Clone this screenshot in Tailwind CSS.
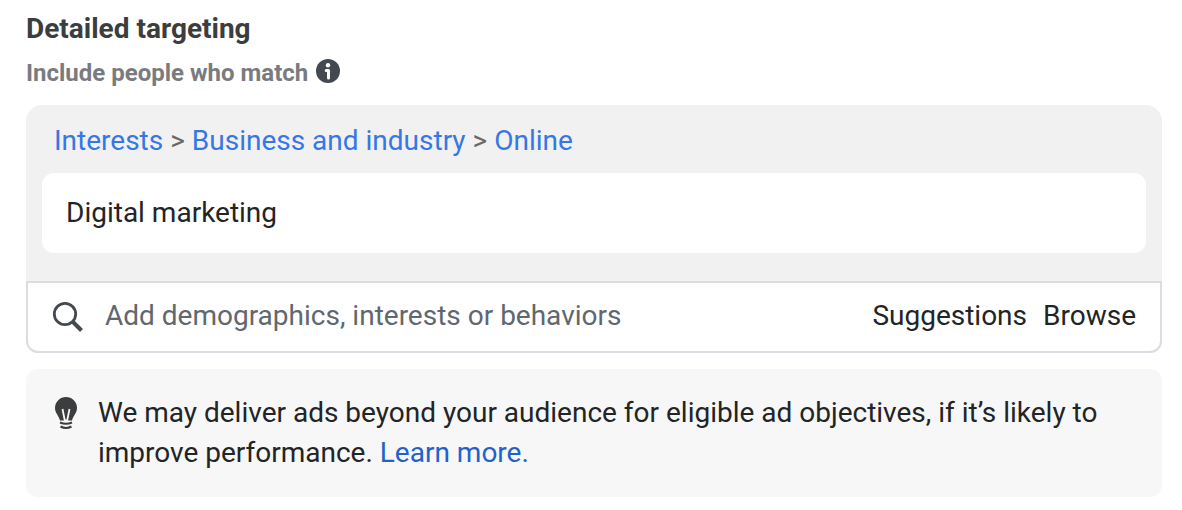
<!DOCTYPE html>
<html lang="en">
<head>
  <meta charset="UTF-8" />
  <meta name="viewport" content="width=device-width, initial-scale=1.0" />
  <title>Detailed targeting</title>
  <script src="https://cdn.jsdelivr.net/npm/@tailwindcss/browser@4"></script>
</head>
<body class="bg-white font-['Roboto',sans-serif] text-[28px] leading-10 text-[#222426]">

<main class="pl-[26px] pr-5 pt-[9px] pb-3">

  <!-- Heading -->
  <h1 class="font-bold text-[#3c3d3e]">Detailed targeting</h1>
  <div class="flex items-center gap-2 pt-1 pb-3">
    <h2 class="text-2xl leading-10 font-bold text-[#7a7b7f]">Include people who match</h2>
    <button type="button" aria-label="More information" class="size-6 mb-1">
      <svg viewBox="0 0 24 24" class="size-6">
        <circle cx="12" cy="12" r="12" fill="#444950" />
        <circle cx="12" cy="6.200" r="2.200" fill="#fff" />
        <path d="M10.200 11.500h2.300v7.500" fill="none" stroke="#fff" stroke-width="3" stroke-linecap="round" stroke-linejoin="round" />
      </svg>
    </button>
  </div>

  <!-- Selected interests -->
  <section class="rounded-t-2xl rounded-b-xl bg-[#f1f1f1]">
    <nav aria-label="Category" class="px-7 pt-4 pb-3 text-[#69696b]">
      <a href="#" class="text-[#3578e5]">Interests</a>
      <span>&gt;</span>
      <a href="#" class="text-[#3578e5]">Business and industry</a>
      <span>&gt;</span>
      <a href="#" class="text-[#3578e5]">Online</a>
    </nav>
    <div class="mx-4 mb-7 rounded-xl bg-white px-6 py-5">Digital marketing</div>

    <!-- Search -->
    <div class="flex items-center rounded-b-xl border-2 border-[#dadde1] bg-white px-6 pt-[13px] pb-[15px]">
      <svg viewBox="0 0 32 32" class="size-8 shrink-0" aria-hidden="true">
        <circle cx="13" cy="14" r="10.700" fill="none" stroke="#444950" stroke-width="2.800" />
        <path d="M20.500 21.500l9 9" fill="none" stroke="#444950" stroke-width="4" />
      </svg>
      <input type="text" aria-label="Add demographics, interests or behaviors" placeholder="Add demographics, interests or behaviors" class="ml-[21px] h-10 min-w-0 flex-1 outline-none placeholder:text-[#606770]" />
      <button type="button">Suggestions</button>
      <button type="button" class="ml-4">Browse</button>
    </div>
  </section>

  <!-- Tip -->
  <section class="mt-4 flex gap-5 rounded-xl bg-[#f7f7f7] px-7 py-6">
    <svg viewBox="0 0 24 34" class="mt-1 h-[34px] w-6 shrink-0" aria-hidden="true">
      <path d="M12 0a11 11 0 0 1 11 11c0 5-3.500 7-5 12.500H6C4.500 18 1 16 1 11A11 11 0 0 1 12 0z" fill="#3c3d3e" />
      <path d="M8.500 12l2.300 11.500h2.400l2.300-11.500" fill="none" stroke="#f7f7f7" stroke-width="1.800" />
      <path d="M10.300 12l1.700 9 1.700-9z" fill="#3c3d3e" />
      <path d="M6 25.500q6 2.500 12 0M6.500 29.500q5.500 3 11 0" fill="none" stroke="#3c3d3e" stroke-width="2" />
    </svg>
    <p>We may deliver ads beyond your audience for eligible ad objectives, if it’s likely to improve performance. <a href="#" class="text-[#2460cc]">Learn more.</a></p>
  </section>

</main>

</body>
</html>
